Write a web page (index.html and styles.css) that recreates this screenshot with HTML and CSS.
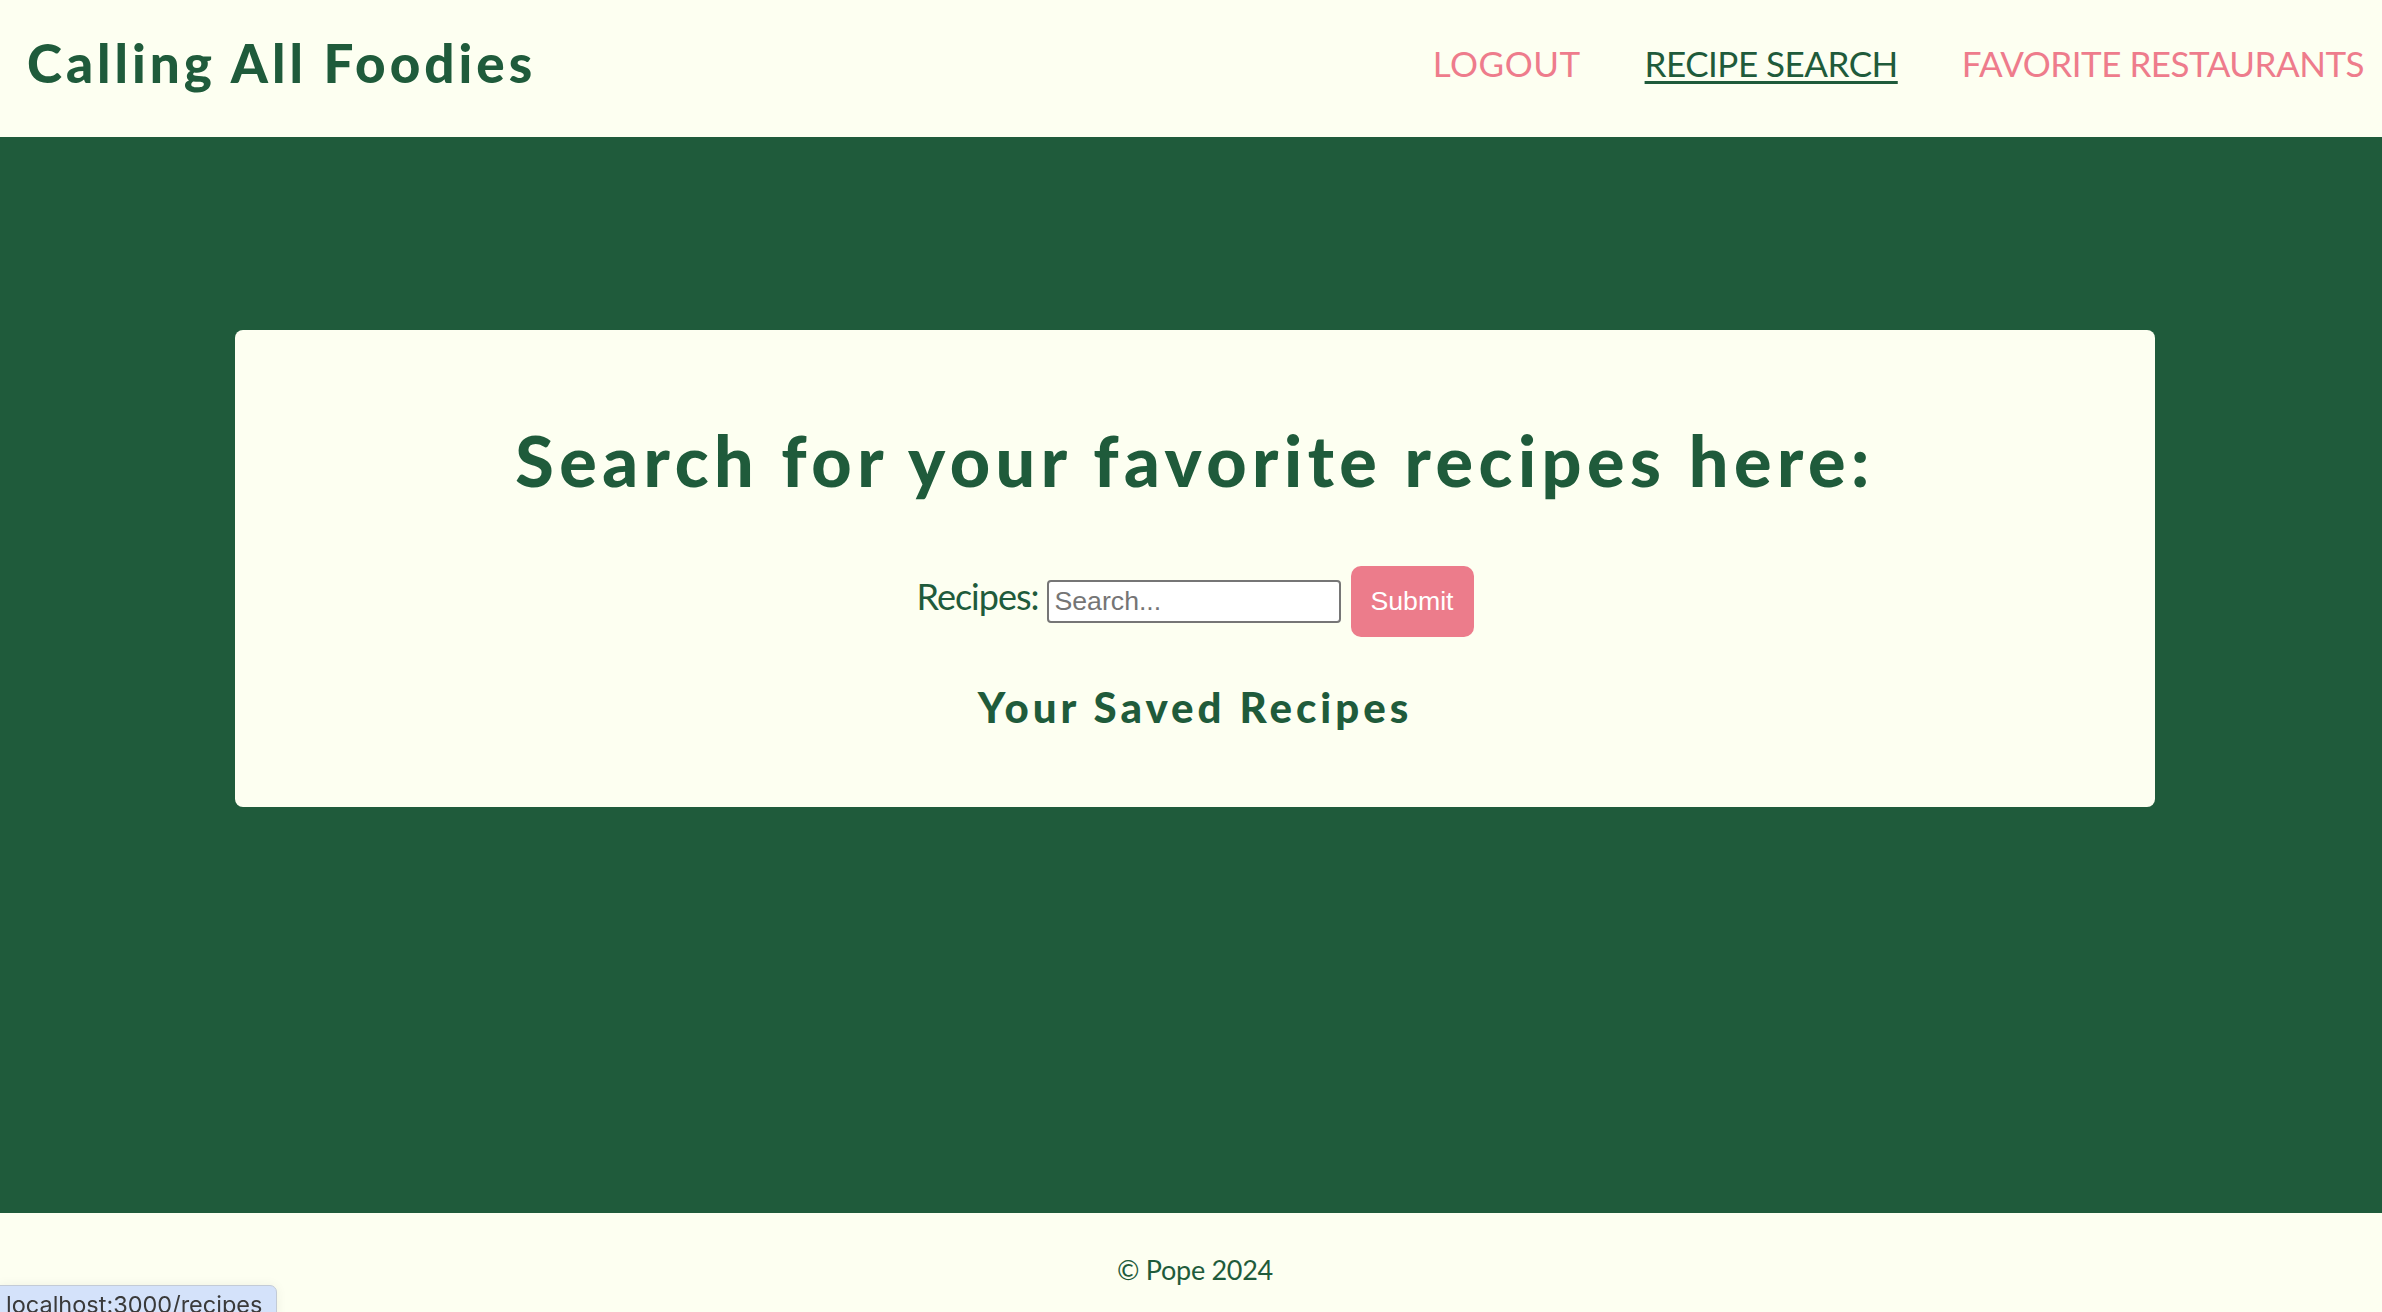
FILE: index.html
```html
<!DOCTYPE html>
<html lang="en">
<head>
<meta charset="utf-8">
<title>Calling All Foodies</title>
<link rel="stylesheet" href="styles.css">
</head>
<body>
<header class="site-header">
  <div class="brand">Calling All Foodies</div>
  <nav class="nav">
    <a class="nav-link" href="#">LOGOUT</a>
    <a class="nav-link active" href="#">RECIPE SEARCH</a>
    <a class="nav-link" href="#">FAVORITE RESTAURANTS</a>
  </nav>
</header>
<main class="main">
  <section class="card">
    <h1 class="card-title">Search for your favorite recipes here:</h1>
    <form class="search-form">
      <label class="search-label" for="q">Recipes:</label>
      <input class="search-input" id="q" type="text" placeholder="Search...">
      <button class="search-btn" type="button">Submit</button>
    </form>
    <h2 class="saved-title">Your Saved Recipes</h2>
  </section>
</main>
<footer class="site-footer">© Pope 2024</footer>
<div class="status-tip">localhost:3000/recipes</div>
</body>
</html>
```
FILE: styles.css
```css
html, body {
  margin: 0;
  padding: 0;
}
body {
  background: #fdfff1;
  font-family: "Lato", "Open Sans", sans-serif;
  color: #1f5b3b;
  line-height: 1.2;
}
.site-header {
  height: 137px;
  box-sizing: border-box;
  display: flex;
  align-items: center;
  justify-content: space-between;
  padding: 0 18px 0 27px;
}
.brand {
  font-size: 53px;
  font-weight: 900;
  letter-spacing: 4px;
  margin-top: -11px;
}
.nav {
  display: flex;
  gap: 64px;
  margin-top: -11px;
}
.nav-link {
  font-size: 35px;
  color: #ee7c8c;
  text-decoration: none;
  letter-spacing: -0.5px;
}
.nav-link:first-child {
  letter-spacing: 0.5px;
}
.nav-link.active {
  color: #1f5b3b;
  text-decoration: underline;
  text-decoration-thickness: 3px;
  text-underline-offset: 4px;
}
.main {
  background: #1f5b3b;
  height: 1076px;
  box-sizing: border-box;
  padding-top: 193px;
}
.card {
  width: 1920px;
  margin: 0 0 0 235px;
  background: #fdfff1;
  border-radius: 8px;
  box-sizing: border-box;
  height: 477px;
  padding-top: 88px;
  display: flex;
  flex-direction: column;
  align-items: center;
}
.card-title {
  margin: 0;
  font-size: 70px;
  font-weight: 900;
  line-height: 84px;
  letter-spacing: 5.5px;
}
.search-form {
  display: flex;
  align-items: baseline;
  margin-top: 64px;
}
.search-label {
  font-size: 36px;
  margin-right: 8px;
  letter-spacing: -1px;
}
.search-input {
  width: 294px;
  height: 43px;
  box-sizing: border-box;
  border: 2px solid #767676;
  border-radius: 4px;
  padding: 0 6px;
  font-family: "Liberation Sans", Arial, sans-serif;
  font-size: 26.67px;
  background: #fff;
  color: #222;
  margin-right: 10px;
}
.search-input::placeholder {
  color: #757575;
}
.search-btn {
  font-family: "Liberation Sans", Arial, sans-serif;
  font-size: 26.67px;
  color: #fff;
  background: #ec7c8b;
  border: none;
  border-radius: 10px;
  width: 123px;
  height: 71px;
  padding: 0;
}
.saved-title {
  margin: 45px 0 0;
  font-size: 42px;
  font-weight: 900;
  line-height: 50px;
  letter-spacing: 4px;
}
.site-footer {
  height: 99px;
  box-sizing: border-box;
  padding: 41px 0 0 8px;
  text-align: center;
  font-size: 27px;
  letter-spacing: -0.3px;
}
.status-tip {
  position: fixed;
  left: -1px;
  bottom: -10px;
  width: 278px;
  height: 37px;
  box-sizing: border-box;
  background: #d4e2fa;
  border: 1px solid #c3cbd6;
  border-radius: 0 7px 0 0;
  padding: 5px 0 0 6px;
  font-family: "Inter", "Liberation Sans", sans-serif;
  font-size: 23.5px;
  line-height: 28px;
  color: #3a3a3a;
  box-shadow: 0 0 12px rgba(0,0,0,0.06);
}
```
